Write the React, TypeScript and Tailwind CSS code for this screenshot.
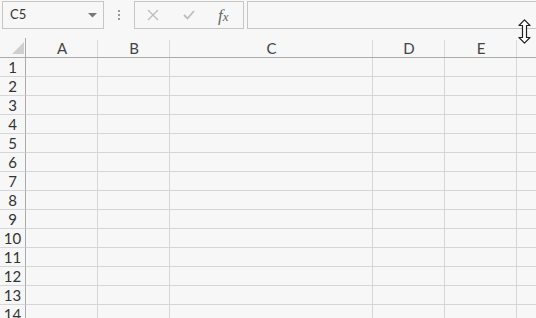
import React from "react";

const cols = [
  { name: "A", w: 72 },
  { name: "B", w: 72 },
  { name: "C", w: 203 },
  { name: "D", w: 72 },
  { name: "E", w: 72 },
];
const rows = Array.from({ length: 14 }, (_, i) => i + 1);

export default function App() {
  return (
    <div
      className="w-[536px] h-[318px] overflow-hidden bg-[#f7f7f7] text-[#444]"
      style={{ fontFamily: "Lato, 'Open Sans', sans-serif" }}
    >
      {/* toolbar */}
      <div className="h-[38px] flex items-start pt-[1px]">
        <div className="ml-[2px] w-[102px] h-[28px] border border-[#c6c6c6] flex items-center justify-between pl-[7px] pr-[6px]">
          <span className="text-[13px] text-[#333]">C5</span>
          <svg width="9" height="5" viewBox="0 0 9 5">
            <path d="M0 0 H9 L4.5 4.5 Z" fill="#777" />
          </svg>
        </div>
        <div className="w-[30px] h-[28px] flex flex-col items-center justify-center gap-[2px]">
          <div className="w-[2px] h-[2px] bg-[#999]" />
          <div className="w-[2px] h-[2px] bg-[#999]" />
          <div className="w-[2px] h-[2px] bg-[#999]" />
        </div>
        <div className="w-[110px] h-[28px] border border-[#c6c6c6] flex items-center pl-[12px]">
          <svg width="12" height="12" viewBox="0 0 12 12">
            <path d="M1 1 L11 11 M11 1 L1 11" stroke="#bdbdbd" strokeWidth="1.4" />
          </svg>
          <svg className="ml-[24px]" width="12" height="10" viewBox="0 0 12 10">
            <path d="M1 5 L4.5 8.5 L11 1" stroke="#bdbdbd" strokeWidth="1.8" fill="none" />
          </svg>
          <span
            className="ml-[23px] text-[17px] italic text-[#666] leading-none"
            style={{ fontFamily: "'Liberation Serif', serif" }}
          >
            f<span className="text-[13px]">x</span>
          </span>
        </div>
        <div className="ml-[3px] flex-1 h-[28px] border border-[#c6c6c6] border-r-0 relative">
          <svg
            className="absolute left-[270px] top-[17px]"
            width="13"
            height="25"
            viewBox="0 0 13 25"
          >
            <path
              d="M6.5 0.8 L12 6.5 L8.5 6.5 L8.5 18.5 L12 18.5 L6.5 24.2 L1 18.5 L4.5 18.5 L4.5 6.5 L1 6.5 Z"
              fill="#fff"
              stroke="#222"
              strokeWidth="1.2"
              strokeLinejoin="round"
            />
          </svg>
        </div>
      </div>

      {/* header row */}
      <div className="flex h-[20px] border-b border-[#ababab]">
        <div className="w-[26px] shrink-0 border-r border-[#ababab] relative">
          <svg className="absolute left-[12px] top-[4px]" width="12" height="12" viewBox="0 0 12 12">
            <path d="M12 0 L12 12 L0 12 Z" fill="#cfcfcf" />
          </svg>
        </div>
        {cols.map((c) => (
          <div
            key={c.name}
            style={{ width: c.w }}
            className="shrink-0 flex items-end justify-center relative"
          >
            <div className="absolute right-0 top-[2px] bottom-0 w-px bg-[#dadada]" />
            <span className="text-[15px] leading-[18px]">{c.name}</span>
          </div>
        ))}
        <div className="flex-1" />
      </div>

      {/* rows */}
      {rows.map((r) => (
        <div key={r} className="flex h-[19px]">
          <div className="w-[26px] shrink-0 border-r border-[#ababab] border-b border-b-[#d6d6d6] flex items-center justify-center">
            <span className="text-[15px] leading-none text-[#333]">{r}</span>
          </div>
          {cols.map((c) => (
            <div
              key={c.name}
              style={{ width: c.w }}
              className="shrink-0 border-r border-b border-[#d6d6d6]"
            />
          ))}
          <div className="flex-1 border-b border-[#d6d6d6]" />
        </div>
      ))}
    </div>
  );
}
